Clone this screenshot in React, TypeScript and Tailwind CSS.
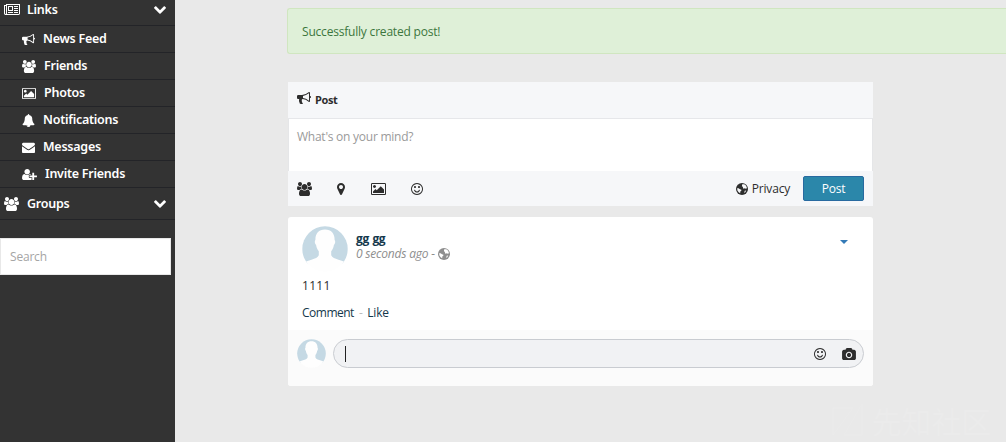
import type { ReactNode } from "react";

type IconProps = { className?: string };

function Glyph({ d, box, className }: { d: string; box: string; className?: string }) {
  return (
    <svg viewBox={box} className={`shrink-0 ${className ?? ""}`} fill="currentColor" aria-hidden="true">
      <path d={d} />
    </svg>
  );
}

const Bullhorn = ({ className }: IconProps) => (
  <Glyph className={className} box="0 0 1792 1792" d="M1664 640q53 0 90.5 37.5t37.5 90.5-37.5 90.5-90.5 37.5v384q0 52-38 90t-90 38q-417-347-812-380-58 19-91 66t-31 100.5 40 92.5q-20 33-23 65.5t6 58 33.5 55 48 50 61.5 50.5q-29 58-111.5 83t-168.5 11.5-132-55.5q-7-23-29.5-87.5t-32-94.5-23-89-15-101 3.5-98.5 22-110.5h-122q-66 0-113-47t-47-113v-192q0-66 47-113t113-47h480q435 0 896-384 52 0 90 38t38 90v384zm-128 604v-954q-394 302-768 343v270q377 42 768 341z" />
);
const Users = ({ className }: IconProps) => (
  <Glyph className={className} box="0 0 1920 1792" d="M593 896q-162 5-265 128h-134q-82 0-138-40.5t-56-118.5q0-353 124-353 6 0 43.5 21t97.5 42.5 119 21.5q67 0 133-23-5 37-5 66 0 139 81 256zm1071 637q0 120-73 189.5t-194 69.5h-874q-121 0-194-69.5t-73-189.5q0-53 3.5-103.5t14-109 26.5-108.5 43-97.5 62-81 85.5-53.5 111.5-20q10 0 43 21.5t73 48 107 48 135 21.5 135-21.5 107-48 73-48 43-21.5q61 0 111.5 20t85.5 53.5 62 81 43 97.5 26.5 108.5 14 109 3.5 103.5zm-1024-1277q0 106-75 181t-181 75-181-75-75-181 75-181 181-75 181 75 75 181zm704 384q0 159-112.5 271.5t-271.5 112.5-271.5-112.5-112.5-271.5 112.5-271.5 271.5-112.5 271.5 112.5 112.5 271.5zm576 225q0 78-56 118.5t-138 40.5h-134q-103-123-265-128 81-117 81-256 0-29-5-66 66 23 133 23 59 0 119-21.5t97.5-42.5 43.5-21q124 0 124 353zm-128-609q0 106-75 181t-181 75-181-75-75-181 75-181 181-75 181 75 75 181z" />
);
const Picture = ({ className }: IconProps) => (
  <Glyph className={className} box="-64 0 1920 1792" d="M576 576q0 80-56 136t-136 56-136-56-56-136 56-136 136-56 136 56 56 136zm1024 384v448h-1408v-192l320-320 160 160 512-512zm96-704h-1600q-13 0-22.5 9.5t-9.5 22.5v1216q0 13 9.5 22.5t22.5 9.5h1600q13 0 22.5-9.5t9.5-22.5v-1216q0-13-9.5-22.5t-22.5-9.5zm160 32v1216q0 66-47 113t-113 47h-1600q-66 0-113-47t-47-113v-1216q0-66 47-113t113-47h1600q66 0 113 47t47 113z" />
);
const Bell = ({ className }: IconProps) => (
  <Glyph className={className} box="0 0 1792 1792" d="M912 1696q0-16-16-16-59 0-101.5-42.5t-42.5-101.5q0-16-16-16t-16 16q0 73 51.5 124.5t124.5 51.5q16 0 16-16zm816-288q0 52-38 90t-90 38h-448q0 106-75 181t-181 75-181-75-75-181h-448q-52 0-90-38t-38-90q50-42 91-88t85-119.5 74.5-158.5 50-206 19.5-260q0-152 117-282.5t307-158.5q-8-19-8-39 0-40 28-68t68-28 68 28 28 68q0 20-8 39 190 28 307 158.5t117 282.5q0 139 19.5 260t50 206 74.5 158.5 85 119.5 91 88z" />
);
const Envelope = ({ className }: IconProps) => (
  <Glyph className={className} box="0 0 1792 1792" d="M1792 710v794q0 66-47 113t-113 47h-1472q-66 0-113-47t-47-113v-794q44 49 101 87 362 246 497 345 57 42 92.5 65.5t94.5 48 110 24.5h2q51 0 110-24.5t94.5-48 92.5-65.5q170-123 498-345 57-39 100-87zm0-294q0 79-49 151t-122 123q-376 261-468 325-10 7-42.5 31t-54 38.5-52 32.5-57.5 27-50 9h-2q-23 0-50-9t-57.5-27-52-32.5-54-38.5-42.5-31q-91-64-262-182.5t-205-142.5q-62-42-117-115.5t-55-136.5q0-78 41.5-130t118.5-52h1472q65 0 112.5 47t47.5 113z" />
);
const UserPlus = ({ className }: IconProps) => (
  <Glyph className={className} box="0 0 2048 1792" d="M704 896q-159 0-271.5-112.5t-112.5-271.5 112.5-271.5 271.5-112.5 271.5 112.5 112.5 271.5-112.5 271.5-271.5 112.5zm960 128h352q13 0 22.5 9.5t9.5 22.5v192q0 13-9.5 22.5t-22.5 9.5h-352v352q0 13-9.5 22.5t-22.5 9.5h-192q-13 0-22.5-9.5t-9.5-22.5v-352h-352q-13 0-22.5-9.5t-9.5-22.5v-192q0-13 9.5-22.5t22.5-9.5h352v-352q0-13 9.5-22.5t22.5-9.5h192q13 0 22.5 9.5t9.5 22.5v352zm-736 224q0 52 38 90t90 38h256v238q-68 50-171 50h-874q-121 0-194-69t-73-190q0-53 3.5-103.5t14-109 26.5-108.5 43-97.5 62-81 85.5-53.5 111.5-20q19 0 39 17 79 61 154.5 91.5t164.5 30.5 164.5-30.5 154.5-91.5q20-17 39-17 132 0 217 96h-223q-52 0-90 38t-38 90v192z" />
);
const Newspaper = ({ className }: IconProps) => (
  <Glyph className={className} box="0 128 2048 1536" d="M1024 512h-384v384h384v-384zm128 640v128h-640v-128h640zm0-768v640h-640v-640h640zm640 768v128h-512v-128h512zm0-256v128h-512v-128h512zm0-256v128h-512v-128h512zm0-256v128h-512v-128h512zm-1536 960v-960h-128v960q0 26 19 45t45 19 45-19 19-45zm1664 0v-1088h-1536v1088q0 33-11 64h1483q26 0 45-19t19-45zm128-1216v1216q0 80-56 136t-136 56h-1664q-80 0-136-56t-56-136v-1088h256v-128h1792z" />
);
const Marker = ({ className }: IconProps) => (
  <Glyph className={className} box="384 128 1024 1536" d="M1152 640q0-106-75-181t-181-75-181 75-75 181 75 181 181 75 181-75 75-181zm256 0q0 109-33 179l-364 774q-16 33-47.5 52t-67.5 19-67.5-19-46.5-52l-365-774q-33-70-33-179 0-212 150-362t362-150 362 150 150 362z" />
);
const Smile = ({ className }: IconProps) => (
  <Glyph className={className} box="128 128 1536 1536" d="M1262 1075q-37 121-138 195t-228 74-228-74-138-195q-8-25 4-48.5t38-31.5q25-8 48.5 4t31.5 38q25 80 92.5 129.5t151.5 49.5 151.5-49.5 92.5-129.5q8-26 32-38t49-4 37 31.5 4 48.5zm-494-435q0 53-37.5 90.5t-90.5 37.5-90.5-37.5-37.5-90.5 37.5-90.5 90.5-37.5 90.5 37.5 37.5 90.5zm512 0q0 53-37.5 90.5t-90.5 37.5-90.5-37.5-37.5-90.5 37.5-90.5 90.5-37.5 90.5 37.5 37.5 90.5zm256 256q0-130-51-248.5t-136.5-204-204-136.5-248.5-51-248.5 51-204 136.5-136.5 204-51 248.5 51 248.5 136.5 204 204 136.5 248.5 51 248.5-51 204-136.5 136.5-204 51-248.5zm128 0q0 209-103 385.5t-279.5 279.5-385.5 103-385.5-103-279.5-279.5-103-385.5 103-385.5 279.5-279.5 385.5-103 385.5 103 279.5 279.5 103 385.5z" />
);
const Camera = ({ className }: IconProps) => (
  <Glyph className={className} box="0 0 1920 1664" d="M960 672q119 0 203.5 84.5t84.5 203.5-84.5 203.5-203.5 84.5-203.5-84.5-84.5-203.5 84.5-203.5 203.5-84.5zm704-416q106 0 181 75t75 181v896q0 106-75 181t-181 75h-1408q-106 0-181-75t-75-181v-896q0-106 75-181t181-75h224l51-136q19-49 69.5-84.5t103.5-35.5h512q53 0 103.5 35.5t69.5 84.5l51 136h224zm-704 1152q185 0 316.5-131.5t131.5-316.5-131.5-316.5-316.5-131.5-316.5 131.5-131.5 316.5 131.5 316.5 316.5 131.5z" />
);
const Chevron = ({ className }: IconProps) => (
  <Glyph className={className} box="90 533 1612 1035" d="M1683 808l-742 741q-19 19-45 19t-45-19l-742-741q-19-19-19-45.5t19-45.5l166-165q19-19 45-19t45 19l531 531 531-531q19-19 45-19t45 19l166 165q19 19 19 45.5t-19 45.5z" />
);

function Globe({ className, land }: { className?: string; land: string }) {
  return (
    <svg viewBox="0 0 12 12" className={`shrink-0 ${className ?? ""}`} aria-hidden="true">
      <circle cx="6" cy="6" r="6" fill="currentColor" />
      <path fill={land} d="M6.200 1.200 8.200 1.300 9.700 2.300 10.700 4 10.900 5.200 9.900 5.700 8.800 5.200 7.700 5.800 6.900 5.100 7 3.900 5.900 3.200zM1.100 5.200 2.600 5.200 4 6.200 5.400 6.700 5.300 7.800 4.300 8.600 4.200 10.200 2.700 9.300 1.500 7.700zM8.700 7.800 10.200 7.600 9.300 9.200 8.200 9.900z" />
    </svg>
  );
}

function Avatar({ className, id }: { className?: string; id: string }) {
  return (
    <svg viewBox="0 0 46 46" className={`shrink-0 ${className ?? ""}`} aria-hidden="true">
      <clipPath id={id}>
        <circle cx="23" cy="23" r="22.7" />
      </clipPath>
      <g clipPath={`url(#${id})`}>
        <rect width="46" height="37.500" fill="#c5d9e4" />
        <path
          fill="#fefefe"
          d="M23 3.500c6.500 0 9.800 4.300 9.600 10.500 1 1 .7 3.800-.7 5-.4 2.700-1.400 4.700-2.700 6.200v4c1 2.300 3.600 3.300 7.300 4.500 3.500 1 5.500 1.600 9.500 3.300v10H0v-10c4-1.700 6-2.300 9.500-3.300 3.700-1.200 6.300-2.200 7.300-4.500v-4c-1.300-1.500-2.300-3.500-2.700-6.200-1.400-1.200-1.700-4-.7-5C13.200 7.800 16.500 3.500 23 3.500Z"
        />
      </g>
    </svg>
  );
}

function SideItem({ icon, label, indent }: { icon: ReactNode; label: string; indent: string }) {
  return (
    <li className="flex h-[27px] items-center border-b border-[#232428] pl-[22px]">
      <span className={`flex items-center ${indent}`}>{icon}</span>
      <span className="leading-[18px]">{label}</span>
    </li>
  );
}

function Sidebar() {
  return (
    <aside className="h-full w-[175px] shrink-0 bg-[#333333] font-['Noto_Sans','DejaVu_Sans',sans-serif] text-[12.5px] font-semibold tracking-[-0.25px] text-white">
      <div className="flex h-[26px] items-center border-b border-[#232428] pb-[5px] pl-1">
        <Newspaper className="h-[12px] w-[16px]" />
        <span className="ml-[7px]">Links</span>
        <Chevron className="ml-auto mr-[9px] h-[8px] w-[12px]" />
      </div>
      <ul>
        <SideItem icon={<Bullhorn className="size-[13px]" />} indent="w-[21px]" label="News Feed" />
        <SideItem icon={<Users className="h-[13px] w-[14px]" />} indent="w-[22px]" label="Friends" />
        <SideItem icon={<Picture className="h-[13px] w-[14px]" />} indent="w-[22px]" label="Photos" />
        <SideItem icon={<Bell className="size-[13px]" />} indent="w-[21px]" label="Notifications" />
        <SideItem icon={<Envelope className="size-[13px]" />} indent="w-[21px]" label="Messages" />
        <SideItem icon={<UserPlus className="h-[13px] w-[15px]" />} indent="w-[23px]" label="Invite Friends" />
      </ul>
      <div className="flex h-8 items-center border-b border-[#232428] pl-1 pt-px">
        <Users className="h-[14px] w-[15px]" />
        <span className="ml-2">Groups</span>
        <Chevron className="ml-auto mr-[9px] h-[8px] w-[12px]" />
      </div>
      <div className="mt-[18px] flex h-[37px] w-[171px] items-center border border-[#e8e8e8] bg-white pl-[9px] font-['Open_Sans',sans-serif] text-[12px] font-normal tracking-[-0.2px] text-[#a5a5a5]">
        Search
      </div>
    </aside>
  );
}

function Composer() {
  return (
    <section className="ml-px mt-7 w-[585px]">
      <div className="flex h-[37px] items-center border-b border-[#e6e7ea] bg-[#f6f7f9] pl-[9px]">
        <Bullhorn className="mb-1 size-[14px]" />
        <span className="ml-1 text-[11px] font-bold tracking-[-0.4px]">Post</span>
      </div>
      <div className="h-[52px] border-x border-[#e5e6e8] bg-white px-2 pt-[9px] leading-[18px] tracking-[-0.25px] text-[#9a9a9a]">What's on your mind?</div>
      <div className="flex h-[35px] items-center bg-[#f6f7f9] pl-[9px] pr-[9px]">
        <Users className="h-[14px] w-[15px]" />
        <Marker className="ml-[25px] h-[12px] w-[8px]" />
        <Picture className="ml-[26px] h-[14px] w-[15px]" />
        <Smile className="ml-[25px] size-[12px]" />
        <Globe className="ml-auto size-[12px]" land="#f6f7f9" />
        <span className="ml-1">Privacy</span>
        <button className="ml-[13px] h-[25px] w-[61px] rounded-[2px] border border-[#286aa0] bg-[#2b87aa] text-white">Post</button>
      </div>
    </section>
  );
}

function PostCard() {
  return (
    <article className="ml-px mt-[11px] w-[585px] overflow-hidden rounded-[3px] bg-white">
      <div className="h-[113px] px-[14px] pt-[9px]">
        <div className="flex">
          <Avatar id="author-clip" className="size-[46px]" />
          <div className="ml-2 pt-[5px]">
            <div className="text-[12px] font-bold leading-[16px] tracking-[-0.4px] text-[#14384c] [word-spacing:1px]">gg gg</div>
            <div className="flex items-center italic leading-[14px] text-[#8e8e8e]">
              0 seconds ago -
              <Globe className="ml-[3px] size-[12px]" land="#ffffff" />
            </div>
          </div>
          <svg viewBox="0 0 8 4" className="ml-auto mr-[11px] mt-[14px] h-[4px] w-[8px]" aria-hidden="true">
            <path d="M0 0h8L4 4z" fill="#337ab7" />
          </svg>
        </div>
        <p className="mt-[5px] leading-[18px] tracking-[0.3px]">1111</p>
        <div className="mt-[9px] flex leading-[18px] tracking-[-0.5px] text-[#14384c]">
          <span>Comment</span>
          <span className="mx-[5px] text-[#bbbbbb]">-</span>
          <span className="tracking-[-0.2px]">Like</span>
        </div>
      </div>
      <div className="flex h-14 items-start bg-[#fbfbfb] pl-[9px] pr-[9px] pt-[9px]">
        <Avatar id="reader-clip" className="size-[29px]" />
        <div className="ml-[7px] flex h-[29px] flex-1 items-center rounded-full border border-[#c9ccd1] bg-[#f1f2f4] pl-[11px] pr-[7px]">
          <span className="h-4 w-px bg-[#222222]" />
          <Smile className="ml-auto size-[12px]" />
          <Camera className="ml-[16px] h-[12px] w-[14px]" />
        </div>
      </div>
    </article>
  );
}

function Watermark() {
  return (
    <div className="absolute bottom-1 right-[15px] flex items-center gap-2 font-['Noto_Sans_CJK_SC',sans-serif] text-[30px] leading-9 text-[#ebebeb]">
      <svg viewBox="0 0 32 34" className="h-[34px] w-[32px]" fill="none" stroke="currentColor" aria-hidden="true">
        <path d="M1 5h20L1 32zM30 1v31H12z" />
      </svg>
      先知社区
    </div>
  );
}

export default function App() {
  return (
    <div className="relative flex h-[442px] w-[1006px] overflow-hidden bg-[#e9e9e9] font-['Open_Sans',sans-serif] text-[12px] tracking-[-0.2px] text-[#2d2d2d]">
      <Sidebar />
      <main className="min-w-0 flex-1 pl-28 pt-2">
        <div className="flex h-[46px] items-center rounded-l-[3px] border border-r-0 border-[#d0e6c0] bg-[#dff0d8] pl-[14px] pt-px text-[#3c763d]">
          Successfully created post!
        </div>
        <Composer />
        <PostCard />
      </main>
      <Watermark />
    </div>
  );
}
